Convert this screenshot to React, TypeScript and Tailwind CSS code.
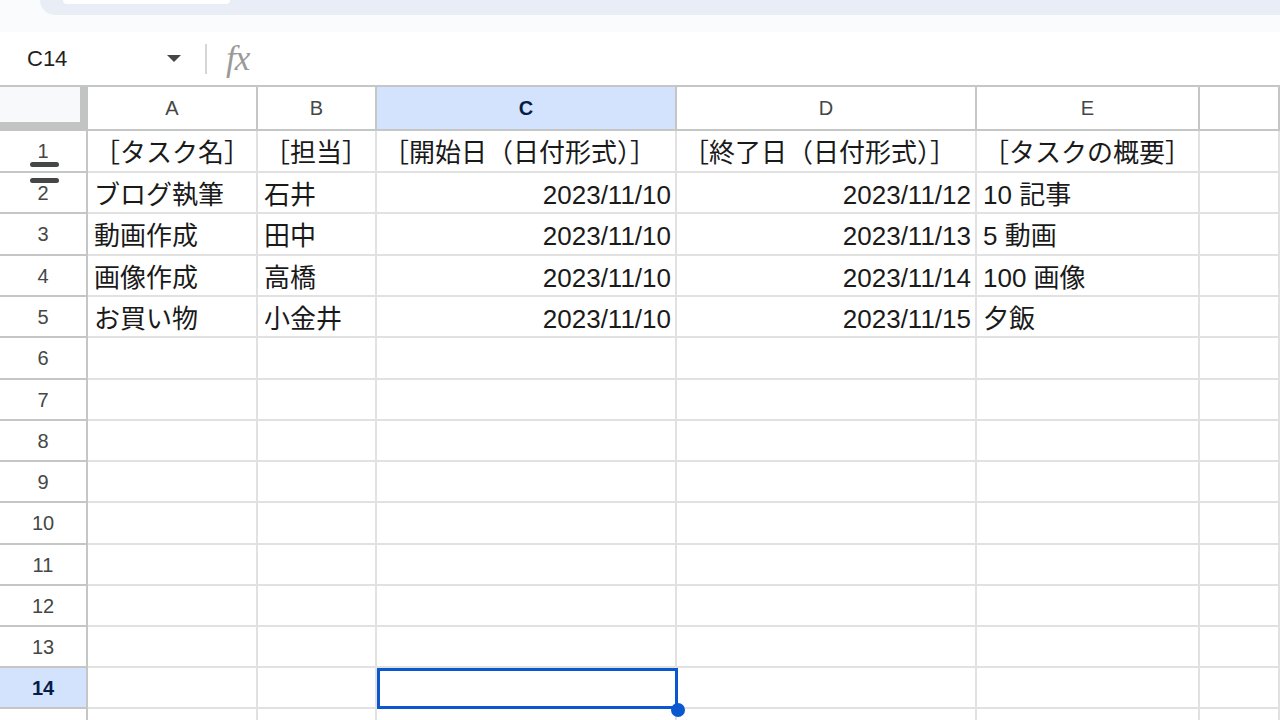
import React from 'react';

const columns = [
  { key: 'A', width: 'w-[170px]' },
  { key: 'B', width: 'w-[119px]' },
  { key: 'C', width: 'w-[300px]' },
  { key: 'D', width: 'w-[300px]' },
  { key: 'E', width: 'w-[223px]' },
  { key: 'F', width: 'w-[80px]' },
];

type Cell = { text: string; align?: 'right' };

const data: Cell[][] = [
  [
    { text: '［タスク名］' },
    { text: '［担当］' },
    { text: '［開始日（日付形式）］' },
    { text: '［終了日（日付形式）］' },
    { text: '［タスクの概要］' },
  ],
  [
    { text: 'ブログ執筆' },
    { text: '石井' },
    { text: '2023/11/10', align: 'right' },
    { text: '2023/11/12', align: 'right' },
    { text: '10 記事' },
  ],
  [
    { text: '動画作成' },
    { text: '田中' },
    { text: '2023/11/10', align: 'right' },
    { text: '2023/11/13', align: 'right' },
    { text: '5 動画' },
  ],
  [
    { text: '画像作成' },
    { text: '高橋' },
    { text: '2023/11/10', align: 'right' },
    { text: '2023/11/14', align: 'right' },
    { text: '100 画像' },
  ],
  [
    { text: 'お買い物' },
    { text: '小金井' },
    { text: '2023/11/10', align: 'right' },
    { text: '2023/11/15', align: 'right' },
    { text: '夕飯' },
  ],
];

// row heights measured from the screenshot
const rowHeights = [
  'h-[42px]', 'h-[41px]', 'h-[42px]', 'h-[41px]', 'h-[41px]',
  'h-[42px]', 'h-[41px]', 'h-[41px]', 'h-[41px]', 'h-[42px]',
  'h-[41px]', 'h-[41px]', 'h-[41px]', 'h-[41px]', 'h-[41px]',
];

export default function App() {
  return (
    <div className="w-[1280px] h-[720px] overflow-hidden bg-white font-['Liberation_Sans','Noto_Sans_CJK_JP',sans-serif]">
      {/* Top toolbar remnant */}
      <div className="flex h-[15px] bg-[#f9fbfd]">
        <div className="w-[40px]" />
        <div className="flex-1 bg-[#e9eef6] rounded-bl-[15px] pl-[23px]">
          <div className="w-[167px] h-[4px] bg-white rounded-b-[6px]" />
        </div>
      </div>
      <div className="h-[17px] bg-[#f9fbfd]" />

      {/* Formula bar */}
      <div className="flex h-[53px] items-center">
        <div className="w-[27px]" />
        <span className="w-[136px] text-[22px] text-[#1f1f1f]">C14</span>
        <svg width="14" height="8" viewBox="0 0 14 8" className="ml-[4px]">
          <path d="M0 0 L14 0 L7 7 Z" fill="#444746" />
        </svg>
        <div className="ml-[24px] w-[2px] h-[30px] bg-[#d5d7d6]" />
        <span className="ml-[19px] text-[35px] italic text-[#9a9a9a] font-['Liberation_Serif',serif] tracking-[-1px] leading-none">
          fx
        </span>
      </div>

      {/* Grid */}
      <div className="relative border-t-2 border-[#c4c7c5]">
        {/* Column headers */}
        <div className="flex h-[44px]">
          <div className="w-[88px] shrink-0 bg-[#f8f9fa] border-r-[8px] border-b-[9px] border-[#c2c4c3]" />
          {columns.map((c) => (
            <div
              key={c.key}
              className={`${c.width} shrink-0 flex items-center justify-center border-r-2 border-b-2 border-[#c4c7c5] text-[20px] ${
                c.key === 'C' ? 'bg-[#d3e3fd] font-bold text-[#041e49]' : 'text-[#444746]'
              }`}
            >
              {c.key === 'F' ? '' : c.key}
            </div>
          ))}
        </div>

        {/* Rows */}
        {rowHeights.map((h, i) => {
          const row = data[i];
          const rowNum = i + 1;
          const selected = rowNum === 14;
          return (
            <div key={rowNum} className={`flex ${h}`}>
              <div
                className={`w-[88px] shrink-0 flex items-center justify-center border-r-2 border-b-2 border-[#c4c7c5] text-[20px] ${
                  selected ? 'bg-[#d3e3fd] font-bold text-[#041e49]' : 'text-[#444746]'
                }`}
              >
                {rowNum <= 14 ? rowNum : ''}
              </div>
              {columns.map((c, ci) => {
                const cell = row ? row[ci] : undefined;
                const isSel = selected && c.key === 'C';
                return (
                  <div
                    key={c.key}
                    className={`${c.width} shrink-0 relative flex items-center border-r-2 border-b-2 border-[#e1e1e1] pl-[6px] pt-[5px] text-[26px] text-[#1a1a1a] whitespace-nowrap overflow-visible ${
                      cell?.align === 'right' ? 'justify-end pr-[4px]' : 'pr-[6px]'
                    } ${isSel ? 'z-10' : ''}`}
                  >
                    {cell?.text}
                    {isSel && (
                      <>
                        <div className="absolute left-0 top-0 -right-[3px] -bottom-[2px] border-[3px] border-[#0b57d0]" />
                        <div className="absolute -right-[10px] -bottom-[10px] w-[14px] h-[14px] rounded-full bg-[#0b57d0]" />
                      </>
                    )}
                  </div>
                );
              })}
            </div>
          );
        })}

        {/* Freeze handle between rows 1 and 2 */}
        <div className="absolute left-[30px] top-[75px] w-[29px] h-[5px] rounded-full bg-[#444746]" />
        <div className="absolute left-[30px] top-[91px] w-[29px] h-[5px] rounded-full bg-[#444746]" />
      </div>
    </div>
  );
}
